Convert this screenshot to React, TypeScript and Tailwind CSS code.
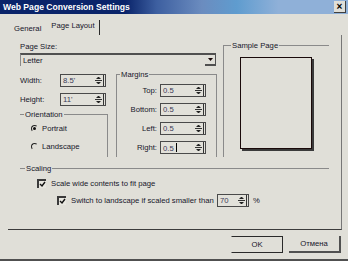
import React from "react";

const font = { fontFamily: '"Liberation Sans", Arial, sans-serif' };

function Spin() {
  return (
    <svg width="9" height="11" viewBox="0 0 9 11" className="shrink-0">
      <path d="M2.5 3.5h4M3.5 2.5h2" stroke="#222" strokeWidth="1" />
      <path d="M1 5.5h7" stroke="#333" strokeWidth="1" />
      <path d="M2.5 7.5h4M3.5 8.5h2" stroke="#222" strokeWidth="1" />
    </svg>
  );
}

function Field({ value, w, cursor }: { value: string; w: string; cursor?: boolean }) {
  return (
    <div className={`flex h-[13px] ${w} items-center border border-[#4a4a4a] bg-[#e2e1da] pl-[2px] pr-[1px]`}>
      <span className="flex-1 leading-[11px] text-[#3a3a58]">
        {value}
        {cursor && <span className="ml-[2px] inline-block h-[9px] w-px translate-y-[1px] bg-black" />}
      </span>
      <span className="flex h-full items-center border-r border-[#333]">
        <Spin />
      </span>
    </div>
  );
}

function Check() {
  return (
    <span className="flex h-[9px] w-[9px] shrink-0 items-center justify-center border-l-2 border-t-2 border-[#3a3a3a] bg-[#e8e7e0]">
      <svg width="7" height="7" viewBox="0 0 7 7">
        <path d="M1 3l2 2 3-4" fill="none" stroke="#111" strokeWidth="1.4" />
      </svg>
    </span>
  );
}

function Radio({ on }: { on?: boolean }) {
  return (
    <span className="flex h-[7px] w-[7px] shrink-0 items-center justify-center rounded-full border border-b-[#e0dfd8] border-l-[#222] border-r-[#e0dfd8] border-t-[#222]">
      {on && <span className="h-[3px] w-[3px] rounded-full bg-[#111]" />}
    </span>
  );
}

export default function App() {
  return (
    <div
      style={font}
      className="flex h-[261px] w-[348px] flex-col overflow-hidden border-b-2 border-[#505050] bg-[#e0dfd8] text-[7.7px] leading-[9px] text-[#16162a]"
    >
      {/* Title bar */}
      <div className="flex h-[14px] shrink-0 items-center justify-between bg-[linear-gradient(to_right,#0a246a_0%,#0a246a_36%,#3d5fa0_45%,#6b8cbf_58%,#5f9ccf_68%,#8fb0d8_80%,#8fb0d8_100%)] pl-[3px] pr-[2px]">
        <span className="text-[8.6px] font-bold text-white">Web Page Conversion Settings</span>
        <span className="flex h-[12px] w-[12px] items-center justify-center border-b border-r border-[#404040] bg-[#e0dfd8] text-[10px] font-bold leading-none text-black">
          ×
        </span>
      </div>

      {/* Tabs */}
      <div className="flex h-[21px] shrink-0 items-end pl-[14px]">
        <span className="mb-[2px]">General</span>
        <span className="ml-[10px] flex h-[15px] items-start border-r border-[#2a2a2a] pr-[4px] pt-[1px]">Page Layout</span>
      </div>

      {/* Panel */}
      <div className="ml-[8px] flex h-[195px] w-[334px] shrink-0 flex-col border-b border-r border-b-[#3c3c3c] border-r-[#777] pl-[12px] pt-[6px]">
        <div className="flex">
          {/* left column */}
          <div className="flex w-[197px] flex-col pt-[1px]">
            <span>Page Size:</span>
            <div className="mt-[2px] flex h-[13px] w-[196px] items-center border-l border-t-2 border-l-[#8a8a8a] border-t-[#505050] pl-[2px]">
              <span className="flex-1">Letter</span>
              <span className="flex h-full w-[11px] items-center justify-center border-b-2 border-r border-b-[#505050] border-r-[#505050]">
                <svg width="5" height="3" viewBox="0 0 5 3">
                  <path d="M0 0h5L2.5 3z" fill="#1a0a0a" />
                </svg>
              </span>
            </div>

            <div className="mt-[4px] flex">
              <div className="flex w-[88px] flex-col">
                <div className="mt-[4px] flex items-center">
                  <span className="w-[40px]">Width:</span>
                  <Field value="8.5'" w="w-[46px]" />
                </div>
                <div className="mt-[6px] flex items-center">
                  <span className="w-[40px]">Height:</span>
                  <Field value="11'" w="w-[46px]" />
                </div>
                <fieldset className="mt-[4px] h-[47px] border-r border-t border-[#8a8a8a]">
                  <legend className="ml-[4px] px-px">Orientation</legend>
                  <div className="mt-[5px] flex items-center gap-[4px] pl-[11px]">
                    <Radio on />
                    <span>Portrait</span>
                  </div>
                  <div className="mt-[9px] flex items-center gap-[4px] pl-[11px]">
                    <Radio />
                    <span>Landscape</span>
                  </div>
                </fieldset>
              </div>

              <fieldset className="ml-[8px] h-[87px] w-[101px] border-l border-r border-t border-[#8a8a8a]">
                <legend className="ml-[3px] px-px">Margins</legend>
                <div className="mt-[5px] flex flex-col gap-[6px]">
                  {["Top:", "Bottom:", "Left:", "Right:"].map((l, i) => (
                    <div key={l} className="flex items-center">
                      <span className="w-[41px] pr-[1px] text-right">{l}</span>
                      <Field value="0.5" w="ml-[2px] w-[46px]" cursor={i === 3} />
                    </div>
                  ))}
                </div>
              </fieldset>
            </div>
          </div>

          {/* Sample page */}
          <fieldset className="ml-[6px] h-[116px] w-[106px] border-l border-t border-[#8a8a8a]">
            <legend className="ml-[7px] px-px">Sample Page</legend>
            <div className="ml-[16px] mt-[7px] h-[92px] w-[72px] border border-[#1a0a0a] shadow-[2px_2px_0_#3a3a3a]" />
          </fieldset>
        </div>

        {/* Scaling */}
        <fieldset className="mt-[7px] w-[309px] border-t border-[#8a8a8a]">
          <legend className="ml-[5px] px-px">Scaling</legend>
          <div className="mt-[6px] flex items-center gap-[5px] pl-[17px]">
            <Check />
            <span>Scale wide contents to fit page</span>
          </div>
          <div className="mt-[6px] flex items-center pl-[37px]">
            <Check />
            <span className="ml-[5px] w-[146px]">Switch to landscape if scaled smaller than</span>
            <Field value="70" w="w-[32px]" />
            <span className="ml-[4px]">%</span>
          </div>
        </fieldset>
      </div>

      {/* Buttons */}
      <div className="mt-[6px] flex justify-end gap-[6px] pr-[7px]">
        <button className="flex h-[17px] w-[52px] items-center justify-center border border-[#2a2a2a] border-l-[#e0dfd8] bg-[#e0dfd8]">
          OK
        </button>
        <button className="flex h-[17px] w-[52px] items-center justify-center border-b-2 border-r-2 border-[#505050] bg-[#e0dfd8]">
          Отмена
        </button>
      </div>
    </div>
  );
}
